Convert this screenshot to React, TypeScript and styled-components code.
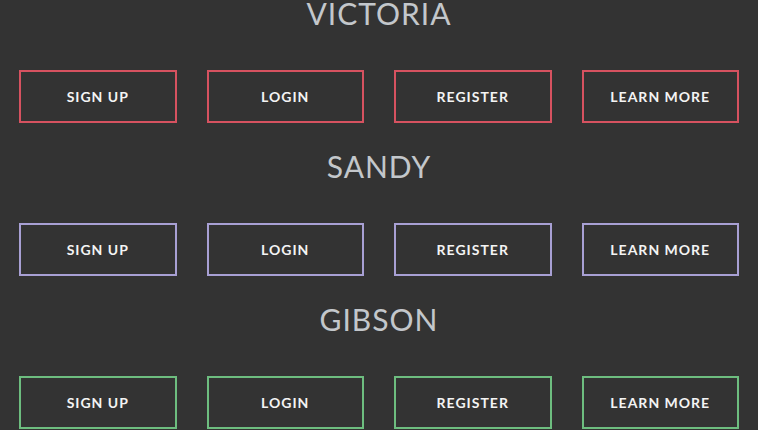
import styled, { createGlobalStyle } from "styled-components";

const GlobalStyle = createGlobalStyle`
  html, body {
    margin: 0;
    padding: 0;
    background: #333333;
  }
  body {
    font-family: Lato, "Open Sans", sans-serif;
  }
`;

const themes = [
  { name: "VICTORIA", color: "#d65260" },
  { name: "SANDY", color: "#a8a0d4" },
  { name: "GIBSON", color: "#6dbd7f" },
];

const labels = ["SIGN UP", "LOGIN", "REGISTER", "LEARN MORE"];

const Page = styled.div`
  display: flex;
  flex-direction: column;
  gap: 30px;
  height: 430px;
  overflow: hidden;
`;

const Section = styled.section`
  display: flex;
  flex-direction: column;
  gap: 44px;
`;

const Title = styled.h2`
  margin: 0;
  text-align: center;
  font-size: 30px;
  line-height: 26px;
  font-weight: 400;
  letter-spacing: 1px;
  color: #c3c7cb;
`;

const ButtonRow = styled.div`
  display: flex;
  gap: 30px;
  padding: 0 19px;
`;

const OutlineButton = styled.button<{ $color: string }>`
  flex: 1;
  height: 53px;
  box-sizing: border-box;
  border: 2px solid ${(p) => p.$color};
  background: transparent;
  color: #f4f4f4;
  font-family: Lato, "Open Sans", sans-serif;
  font-size: 14px;
  font-weight: 700;
  letter-spacing: 1px;
  cursor: pointer;
`;

function App() {
  return (
    <>
      <GlobalStyle />
      <Page>
        {themes.map((theme) => (
          <Section key={theme.name}>
            <Title>{theme.name}</Title>
            <ButtonRow>
              {labels.map((label) => (
                <OutlineButton key={label} $color={theme.color}>
                  {label}
                </OutlineButton>
              ))}
            </ButtonRow>
          </Section>
        ))}
      </Page>
    </>
  );
}

export default App;
